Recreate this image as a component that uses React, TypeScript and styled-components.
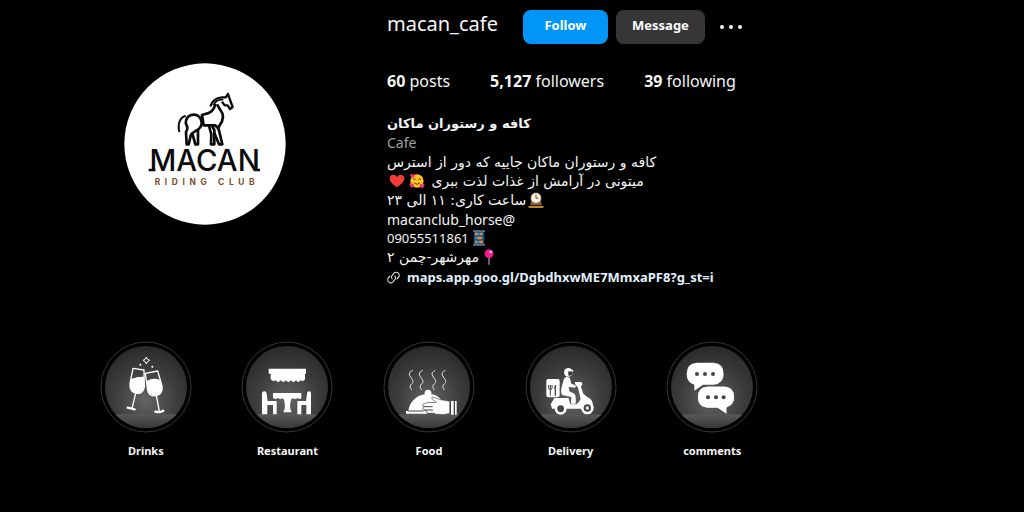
import React from "react";
import styled, { createGlobalStyle } from "styled-components";

const GlobalStyle = createGlobalStyle`
  *, *::before, *::after { box-sizing: border-box; }
  body {
    margin: 0;
    background: #000;
    color: #f5f5f5;
    font-family: "Noto Sans", "DejaVu Sans", sans-serif;
  }
  h1, h2, p, ul { margin: 0; padding: 0; }
  ul { list-style: none; }
`;

const Page = styled.main`
  max-width: 860px;
  padding: 10px 77px 48px 75px;
`;

const Header = styled.header`
  display: grid;
  grid-template-columns: 260px minmax(0, 1fr);
  column-gap: 52px;
`;

const AvatarCell = styled.div`
  display: flex;
  justify-content: center;
  align-items: flex-start;
  padding-top: 53px;
`;

const Logo = styled.svg`
  width: 162px;
  height: 162px;
`;

const Wordmark = styled.text`
  font: 500 88px "Inter", sans-serif;
  fill: #0b0b0b;
`;

const Tagline = styled.text`
  font: 700 25px "Inter", sans-serif;
  letter-spacing: 14px;
  fill: #7b4a26;
`;

const TitleRow = styled.div`
  display: flex;
  align-items: center;
  height: 34px;
`;

const Username = styled.h1`
  flex: none;
  font-size: 20px;
  line-height: 28px;
  font-weight: 400;
  padding-bottom: 6px;
  margin-right: 25px;
`;

const Action = styled.button<{ $primary?: boolean }>`
  height: 34px;
  margin-right: 8px;
  padding: 0 16px 4px;
  min-width: ${(p) => (p.$primary ? 85 : 89)}px;
  border: 0;
  border-radius: 8px;
  background: ${(p) => (p.$primary ? "#0095f6" : "#363636")};
  color: #fff;
  font: 700 13px/20px "Noto Sans", sans-serif;
  cursor: pointer;
`;

const MoreButton = styled.button`
  display: flex;
  margin-left: 4px;
  padding: 0;
  border: 0;
  background: none;
  color: #f5f5f5;
  cursor: pointer;
`;

const Stats = styled.ul`
  display: flex;
  gap: 40px;
  margin-top: 25px;
  font-size: 16px;
  line-height: 24px;
  white-space: nowrap;
`;

const Bio = styled.section`
  margin-top: 21px;
  font-size: 13px;
  line-height: 19px;
  white-space: nowrap;
`;

const Name = styled.h2`
  font: 700 13px/19px "DejaVu Sans", sans-serif;
  text-align: left;
`;

const Category = styled.p`
  color: #a0a0a0;
  font-size: 14px;
`;

const BioText = styled.div`
  padding: 1px 0;
  text-align: left;
`;

const BioLine = styled.p<{ $font?: "latin" | "digits" }>`
  height: 19px;
  font-family: ${(p) => (p.$font ? '"Noto Sans"' : '"DejaVu Sans"')}, sans-serif;
  font-size: ${(p) => (p.$font === "digits" ? 13 : 14)}px;
`;

const Emoji = styled.svg`
  width: 16px;
  height: 16px;
  margin: 0 2px;
  vertical-align: -3px;
`;

const SiteLink = styled.a`
  display: inline-flex;
  align-items: center;
  gap: 7px;
  color: #e0f1ff;
  font-weight: 700;
  text-decoration: none;
`;

const Highlights = styled.ul`
  display: grid;
  grid-template-columns: repeat(5, minmax(0, 1fr));
  margin-top: 52px;
`;

const Highlight = styled.button`
  display: flex;
  flex-direction: column;
  align-items: center;
  gap: 8px;
  width: 100%;
  padding: 0;
  border: 0;
  background: none;
  color: #f5f5f5;
  font: 700 11px/20px "Noto Sans", sans-serif;
  cursor: pointer;
`;

const Cover = styled.svg`
  width: 92px;
  height: 92px;
`;

function MacanLogo() {
  return (
    <Logo viewBox="30 24 486 486" role="img" aria-label="Macan Riding Club">
      <circle cx="273" cy="267" r="242" fill="#fff" />
      <g fill="none" stroke="#0b0b0b" strokeWidth="8" strokeLinejoin="round">
        <path d="M215 182C198 187 190 206 196 231" strokeWidth="6" />
        <path d="M218 268L216 231Q224 220 216 207C214 190 224 179 240 179C254 179 263 190 263 204C263 217 254 224 243 229Q230 236 230 243L224 268Z" />
        <path d="M235 235L244 268H252V224" />
        <path d="M304 147C301 161 293 172 281 175L264 180L269 211H302Q310 214 315 226L325 268H315L300 232" />
        <path d="M309 148L319 165C332 180 329 194 317 211L312 220" />
        <path d="M285 213L292 238L291 268H301V225L294 213" />
        <path d="M289 154C294 139 305 129 323 127L335 127L342 117L347 132L356 156L348 162L341 151H332L324 140" strokeWidth="7" />
        <path d="M299 151C303 139 315 133 328 134" strokeWidth="5" />
        <path d="M104 345H124M420 345H438" strokeWidth="7" />
      </g>
      <Wordmark x="272" y="348" textAnchor="middle">MACAN</Wordmark>
      <Tagline x="279" y="390" textAnchor="middle">RIDING CLUB</Tagline>
    </Logo>
  );
}

function LoveFace() {
  return (
    <Emoji viewBox="0 0 48 48" role="img" aria-label="smiling face with hearts">
      <circle cx="24" cy="24" r="20" fill="#fcc21b" />
      <path d="M12 20q4-6 8 0M28 20q4-6 8 0M16 30q8 8 16 0" fill="none" stroke="#5b3b14" strokeWidth="3" />
      <path d="M11 16C-2 8 4-2 11 5C18-1 22 8 11 16ZM39 46C28 38 32 28 39 35C46 28 52 38 39 46ZM8 44C-3 36 2 27 9 33C16 29 18 38 8 44Z" fill="#f5317f" />
    </Emoji>
  );
}

function Heart() {
  return (
    <Emoji viewBox="0 0 48 48" role="img" aria-label="red heart">
      <path d="M24 43C8 33 2 24 2 16C2 4 18 1 24 12C30 1 46 4 46 16C46 24 40 33 24 43Z" fill="#f23b38" />
    </Emoji>
  );
}

function Clock() {
  return (
    <Emoji viewBox="0 0 48 48" role="img" aria-label="mantelpiece clock">
      <path d="M2 42H46V47H2ZM6 40C10 33 8 24 9 17C11-3 37-3 39 17C40 24 38 33 42 40Z" fill="#855c52" />
      <path d="M2 43H46V47H2Z" fill="#e2a610" />
      <circle cx="24" cy="18" r="15" fill="#fff4df" stroke="#c9a77b" strokeWidth="2" />
      <path d="M24 8V19H31" fill="none" stroke="#555" strokeWidth="3" />
    </Emoji>
  );
}

function Abacus() {
  return (
    <Emoji viewBox="0 0 48 48" role="img" aria-label="abacus">
      <path d="M8 2H40V46H8Z" fill="#1d4a66" />
      <path d="M6 1H42V6H6ZM6 42H42V47H6Z" fill="#4e7798" />
      <path d="M12 12H36M12 24H36M12 36H36" stroke="#2f8cc8" strokeWidth="7" />
      <path d="M12 12H20M28 12H34M20 24H31M12 36H18M26 36H36" stroke="#ff7b2e" strokeWidth="7" />
    </Emoji>
  );
}

function Pin() {
  return (
    <Emoji viewBox="0 0 48 48" role="img" aria-label="round pushpin">
      <path d="M24 22V47" stroke="#8798a2" strokeWidth="4" />
      <path d="M24 29C13 26 11 18 11 13C11-3 37-3 37 13C37 18 35 26 24 29Z" fill="#fa168b" />
      <circle cx="29" cy="9" r="4" fill="#ffd8ed" />
    </Emoji>
  );
}

function Drinks() {
  return (
    <g>
      <g fill="none" stroke="#fff" strokeWidth="4" strokeLinejoin="round">
        <path d="M114 101L147 106L148 157C144 175 132 177 125 176C109 174 104 161 105 146Z" />
        <path d="M151 116L188 109L201 154C204 170 195 181 184 183C171 185 161 180 158 167Z" />
        <path d="M122 176L111 221M184 182L193 230" />
        <path d="M98 219L119 224M181 231Q194 235 205 228" strokeWidth="7" strokeLinecap="round" />
        <path d="M154 67Q156 76 164 77Q156 79 154 88Q152 79 144 77Q152 76 154 67Z" strokeWidth="3" />
      </g>
      <path d="M108 133Q128 125 147 126L147 157Q140 176 125 176Q105 173 105 150ZM155 139Q177 127 194 136L201 155Q202 176 184 183Q162 181 158 165Z" fill="#fff" />
      <circle cx="136" cy="90" r="3" fill="#fff" />
      <circle cx="172" cy="96" r="3" fill="#fff" />
    </g>
  );
}

function Restaurant() {
  return (
    <g fill="#fff">
      <path d="M98 102H210V117H207V134Q202 143 194 137Q187 147 180 137Q172 147 165 137Q157 147 150 137Q142 147 134 137Q126 147 119 137Q110 142 104 133V117H98Z" />
      <path d="M78 176Q78 170 85 170Q92 170 92 177L95 199H122V239H111V211H94V239H78Z" />
      <path d="M225 176Q225 170 219 170Q213 170 213 177L210 199H184V239H196V211H211V239H225Z" />
      <path d="M111 175H196V191Q190 195 185 190Q177 196 168 190Q160 205 163 222L167 233H142L146 222Q149 205 141 190Q134 196 126 190Q118 196 111 190Z" />
    </g>
  );
}

function Food() {
  return (
    <g>
      {[94, 124, 162, 192].map((x) => (
        <path key={x} d={`M${x + 10} 107C${x - 5} 114 ${x} 122 ${x + 6} 130S${x + 14} 145 ${x + 4} 150Q${x - 1} 157 ${x + 7} 166`} fill="none" stroke="#ddd" strokeWidth="3" />
      ))}
      <path d="M84 237V229H91C94 203 115 182 140 179V172Q142 165 150 165Q159 165 160 173V179Q178 181 190 196L215 200V237Z" fill="#fff" />
      <path d="M163 187L188 195L215 200V236Q196 242 180 239L150 237Q142 234 147 229L137 226Q131 221 138 216L133 212Q134 206 142 207L147 204L175 203L164 195Q159 190 163 187Z" fill="#fff" stroke="#444" strokeWidth="2" />
      <path d="M136 216H164M138 226H165M148 236H170M90 229H137" stroke="#444" strokeWidth="3" />
      <path d="M219 199H227V240H219ZM231 199H236V240H231Z" fill="#fff" />
    </g>
  );
}

function Delivery() {
  return (
    <g>
      <path d="M84 133H113Q119 133 119 140V181Q119 188 112 188H86Q79 188 79 181V140Q79 133 84 133Z" fill="#fff" />
      <circle cx="145" cy="113" r="13" fill="#fff" />
      <path d="M144 110H159L155 121L146 124Z" fill="#333" />
      <path d="M143 108H160" stroke="#fff" strokeWidth="4" />
      <path d="M132 132Q140 121 150 131L154 147L166 152Q170 156 165 159L146 157L148 170L163 177Q169 182 167 207H153L154 187L127 181Q121 175 125 157Z" fill="#fff" />
      <path d="M103 190H145L151 209H169Q177 205 182 192L174 159L165 148V142H183Q189 145 186 153H182L190 177L202 187Q220 195 218 212L200 204L185 222H96L92 209Z" fill="#fff" />
      <circle cx="122" cy="222" r="14" fill="#444" stroke="#fff" strokeWidth="8" />
      <circle cx="202" cy="220" r="15" fill="#444" stroke="#fff" strokeWidth="8" />
      <path d="M86 151V162Q92 169 96 162V151M91 151V183M108 151Q100 160 106 165V183V151" fill="none" stroke="#444" strokeWidth="3" />
      <circle cx="202" cy="220" r="5" fill="#fff" />
    </g>
  );
}

function Comments() {
  return (
    <g>
      <path d="M107 84H158Q188 86 188 118Q188 147 158 150H126L100 168V150Q77 144 77 118Q77 86 107 84Z" fill="#fff" />
      <path d="M139 154H192Q221 158 221 187Q221 211 198 219V240L170 221H139Q109 218 109 187Q109 157 139 154Z" fill="#fff" stroke="#4a4a4a" strokeWidth="3" />
      {[108, 132, 156].map((x) => <circle key={x} cx={x} cy="118" r="6" fill="#444" />)}
      {[141, 165, 188].map((x) => <circle key={x} cx={x} cy="188" r="6" fill="#444" />)}
    </g>
  );
}

const highlights = [
  { label: "Drinks", Art: Drinks },
  { label: "Restaurant", Art: Restaurant },
  { label: "Food", Art: Food },
  { label: "Delivery", Art: Delivery },
  { label: "comments", Art: Comments },
];

export default function App() {
  return (
    <>
      <GlobalStyle />
      <Page>
        <Header>
          <AvatarCell><MacanLogo /></AvatarCell>
          <div>
            <TitleRow>
              <Username>macan_cafe</Username>
              <Action $primary type="button">Follow</Action>
              <Action type="button">Message</Action>
              <MoreButton type="button" aria-label="More options">
                <svg width="28" height="24" viewBox="0 0 28 24" fill="currentColor">
                  <circle cx="5" cy="12" r="2" />
                  <circle cx="14" cy="12" r="2" />
                  <circle cx="23" cy="12" r="2" />
                </svg>
              </MoreButton>
            </TitleRow>
            <Stats>
              <li><b>60</b> posts</li>
              <li><b>5,127</b> followers</li>
              <li><b>39</b> following</li>
            </Stats>
            <Bio>
              <Name dir="rtl" lang="fa">کافه و رستوران ماکان</Name>
              <Category>Cafe</Category>
              <BioText dir="rtl" lang="fa">
                <BioLine>کافه و رستوران ماکان جاییه که دور از استرس</BioLine>
                <BioLine>میتونی در آرامش از غذات لذت ببری <LoveFace /><Heart /></BioLine>
                <BioLine><Clock />ساعت کاری: ۱۱ الی ۲۳</BioLine>
                <BioLine $font="latin">@macanclub_horse</BioLine>
                <BioLine $font="digits"><Abacus />09055511861</BioLine>
                <BioLine><Pin />مهرشهر-چمن ۲</BioLine>
              </BioText>
              <SiteLink href="https://maps.app.goo.gl/DgbdhxwME7MmxaPF8?g_st=i">
                <svg width="13" height="13" viewBox="0 0 24 24" fill="none" stroke="#ddd" strokeWidth="2" strokeLinecap="round">
                  <path d="M9.5 14.5A5 5 0 0 1 9.5 8L13 4A5.5 5.5 0 0 1 21 12L18.5 14.5" />
                  <path d="M14.5 9.5A5 5 0 0 1 14.5 16L11 20A5.5 5.5 0 0 1 3 12L5.5 9.5" />
                </svg>
                maps.app.goo.gl/DgbdhxwME7MmxaPF8?g_st=i
              </SiteLink>
            </Bio>
          </div>
        </Header>
        <Highlights>
          {highlights.map(({ label, Art }, i) => (
            <li key={label}>
              <Highlight type="button">
                <Cover viewBox="15 19 276 276" aria-hidden="true">
                  <defs>
                    <radialGradient id={`wall-${i}`} cx="50%" cy="66%" r="65%">
                      <stop offset="0" stopColor="#646464" />
                      <stop offset="60%" stopColor="#3c3c3c" />
                      <stop offset="100%" stopColor="#2b2b2b" />
                    </radialGradient>
                    <linearGradient id={`floor-${i}`} x1="0" y1="0" x2="0" y2="1">
                      <stop offset="0" stopColor="#585858" />
                      <stop offset="1" stopColor="#383838" />
                    </linearGradient>
                  </defs>
                  <circle cx="153" cy="157" r="135" fill="#000" stroke="#363636" strokeWidth="3" />
                  <circle cx="153" cy="157" r="123" fill={`url(#wall-${i})`} />
                  <path d="M61 239H245A123 123 0 0 1 61 239Z" fill={`url(#floor-${i})`} />
                  <Art />
                </Cover>
                {label}
              </Highlight>
            </li>
          ))}
        </Highlights>
      </Page>
    </>
  );
}
